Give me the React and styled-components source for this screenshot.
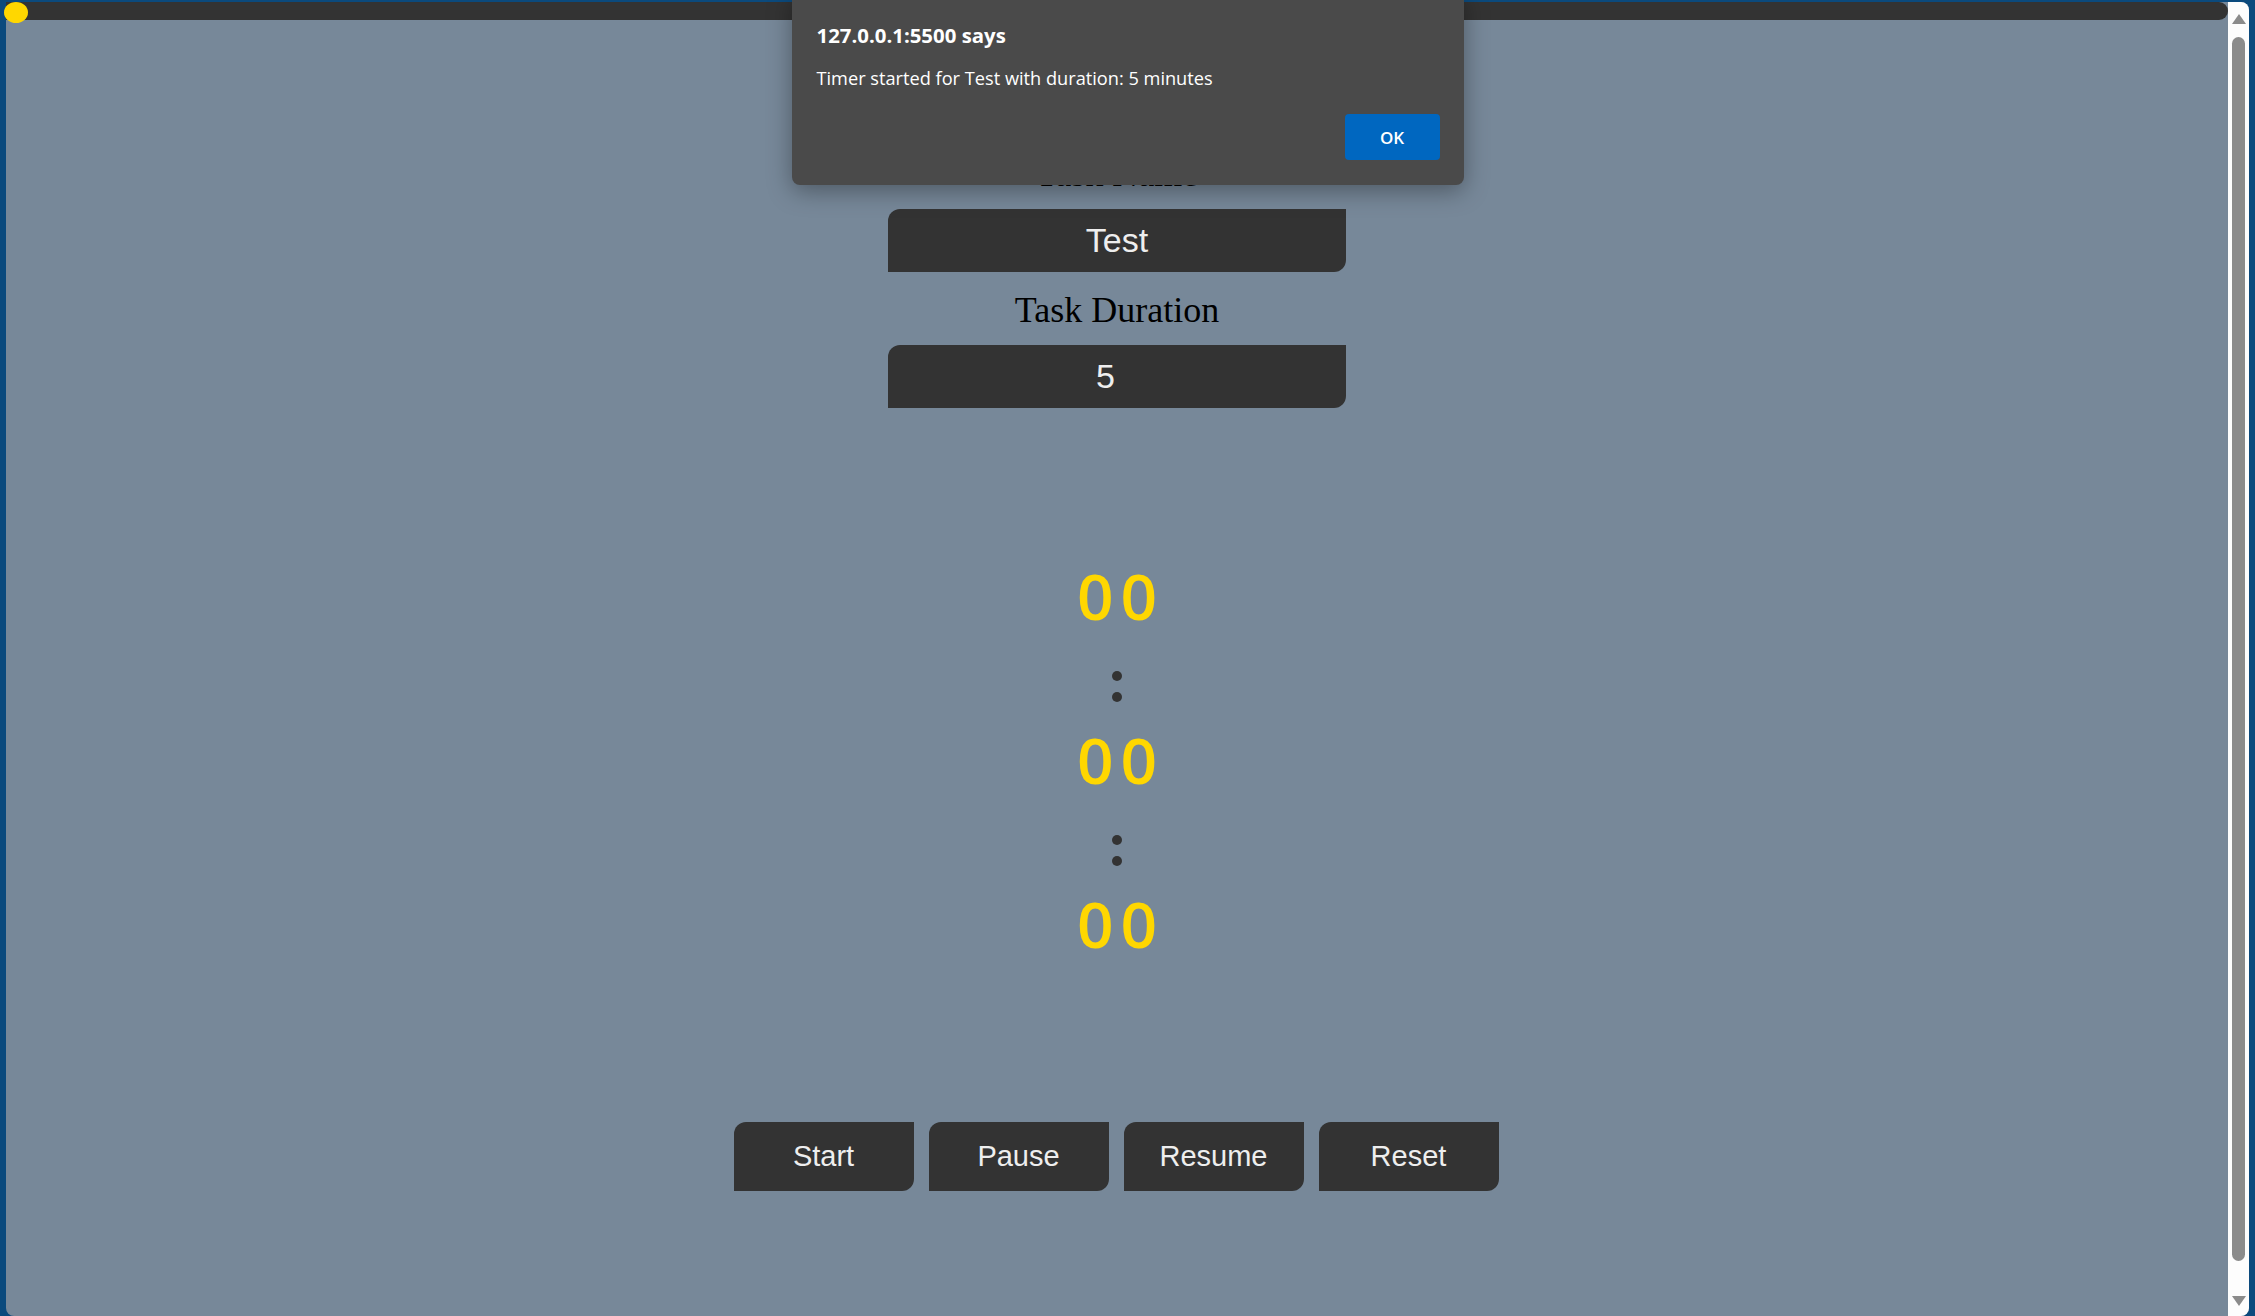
import React from "react";
import styled, { createGlobalStyle } from "styled-components";

const GlobalStyle = createGlobalStyle`
  html, body { margin: 0; padding: 0; height: 100%; overflow: hidden; }
  body { background: #0b4a7d; }
  #root { height: 100%; }
`;

const Frame = styled.div`
  position: relative;
  height: 100vh;
  box-sizing: border-box;
  padding: 2px 6px 0 6px;
  background: #0b4a7d;
`;

const Viewport = styled.div`
  display: flex;
  height: 100%;
  background: #778899;
  border-radius: 0 8px 8px 8px;
`;

const Main = styled.main`
  flex: 1;
  min-width: 0;
  display: flex;
  flex-direction: column;
  align-items: center;
`;

const TopBar = styled.div`
  position: relative;
  align-self: stretch;
  height: 18px;
  background: #333;
  border-radius: 0 9px 9px 0;
`;

const Knob = styled.span`
  position: absolute;
  left: -2px;
  top: 0;
  width: 24px;
  height: 21px;
  border-radius: 50%;
  background: #ffd700;
`;

const Form = styled.section`
  display: flex;
  flex-direction: column;
  align-items: center;
  padding-top: 116px;
`;

const Label = styled.label`
  display: block;
  font-family: "Liberation Serif", "Times New Roman", serif;
  font-size: 36px;
  line-height: 40px;
  margin: 18px 0 15px;
  color: #000;
`;

const Field = styled.input`
  width: 458px;
  height: 63px;
  box-sizing: border-box;
  border: none;
  outline: none;
  background: #333;
  color: #eee;
  font-family: "Liberation Sans", Arial, sans-serif;
  font-size: 34px;
  text-align: center;
  border-radius: 12px 0 12px 0;
  padding: 0 ${(p) => p.$offset || 0}px 0 0;
`;

const Timer = styled.div`
  display: flex;
  flex-direction: column;
  align-items: center;
  margin-top: 152px;
`;

const Digits = styled.div`
  font-family: "Open Sans", "DejaVu Sans", sans-serif;
  font-weight: 600;
  font-size: 64px;
  line-height: 72px;
  letter-spacing: 7px;
  padding-left: 7px;
  color: #ffd700;
`;

const Colon = styled.div`
  height: 92px;
  box-sizing: border-box;
  padding-top: 16px;
  display: flex;
  flex-direction: column;
  justify-content: center;
  align-items: center;
  gap: 11px;
`;

const Dot = styled.span`
  width: 10px;
  height: 10px;
  border-radius: 50%;
  background: #333;
`;

const ButtonRow = styled.div`
  display: flex;
  gap: 15px;
  margin-top: 162px;
  padding-right: 2px;
`;

const ControlButton = styled.button`
  width: 180px;
  height: 69px;
  border: none;
  background: #333;
  color: #eee;
  font-family: "Liberation Sans", Arial, sans-serif;
  font-size: 29px;
  border-radius: 12px 0 12px 0;
  cursor: pointer;
`;

const Scrollbar = styled.div`
  width: 21px;
  flex: none;
  box-sizing: border-box;
  padding: 12px 0 10px;
  background: #fdfdfd;
  border-radius: 0 8px 8px 0;
  display: flex;
  flex-direction: column;
  align-items: center;
`;

const Arrow = styled.span`
  width: 0;
  height: 0;
  border-left: 7px solid transparent;
  border-right: 7px solid transparent;
  ${(p) =>
    p.$down
      ? "border-top: 10px solid #8b8b8b; margin-top: auto;"
      : "border-bottom: 10px solid #8b8b8b;"}
`;

const Thumb = styled.span`
  width: 13px;
  height: 1224px;
  margin-top: 13px;
  border-radius: 7px;
  background: #8b8b8b;
`;

const Dialog = styled.div`
  position: absolute;
  top: -8px;
  left: 50%;
  transform: translateX(-50%);
  width: 672px;
  box-sizing: border-box;
  padding: 29px 24px 25px 25px;
  background: #4a4a4a;
  border-radius: 8px;
  box-shadow: 0 6px 24px rgba(0, 0, 0, 0.35);
  color: #fff;
  font-family: "Open Sans", "Noto Sans", sans-serif;
`;

const DialogTitle = styled.div`
  font-size: 20.4px;
  font-weight: 700;
  line-height: 28px;
`;

const DialogMessage = styled.div`
  margin-top: 16px;
  font-size: 18.2px;
  line-height: 26px;
`;

const DialogActions = styled.div`
  display: flex;
  justify-content: flex-end;
  margin-top: 23px;
`;

const OkButton = styled.button`
  width: 95px;
  height: 46px;
  border: none;
  border-radius: 4px;
  background: #0067c0;
  color: #fff;
  font-family: "Open Sans", "Noto Sans", sans-serif;
  font-size: 17px;
  font-weight: 600;
`;

function TimeUnit({ value }) {
  return <Digits>{value}</Digits>;
}

function Separator() {
  return (
    <Colon>
      <Dot />
      <Dot />
    </Colon>
  );
}

export default function App() {
  return (
    <>
      <GlobalStyle />
      <Frame>
        <Viewport>
          <Main>
            <TopBar>
              <Knob />
            </TopBar>
            <Form>
              <Label>Task Name</Label>
              <Field type="text" value="Test" readOnly />
              <Label>Task Duration</Label>
              <Field type="text" value="5" readOnly $offset={23} />
            </Form>
            <Timer>
              <TimeUnit value="00" />
              <Separator />
              <TimeUnit value="00" />
              <Separator />
              <TimeUnit value="00" />
            </Timer>
            <ButtonRow>
              {["Start", "Pause", "Resume", "Reset"].map((label) => (
                <ControlButton key={label}>{label}</ControlButton>
              ))}
            </ButtonRow>
          </Main>
          <Scrollbar>
            <Arrow />
            <Thumb />
            <Arrow $down />
          </Scrollbar>
        </Viewport>
        <Dialog role="alertdialog">
          <DialogTitle>127.0.0.1:5500 says</DialogTitle>
          <DialogMessage>Timer started for Test with duration: 5 minutes</DialogMessage>
          <DialogActions>
            <OkButton>OK</OkButton>
          </DialogActions>
        </Dialog>
      </Frame>
    </>
  );
}
